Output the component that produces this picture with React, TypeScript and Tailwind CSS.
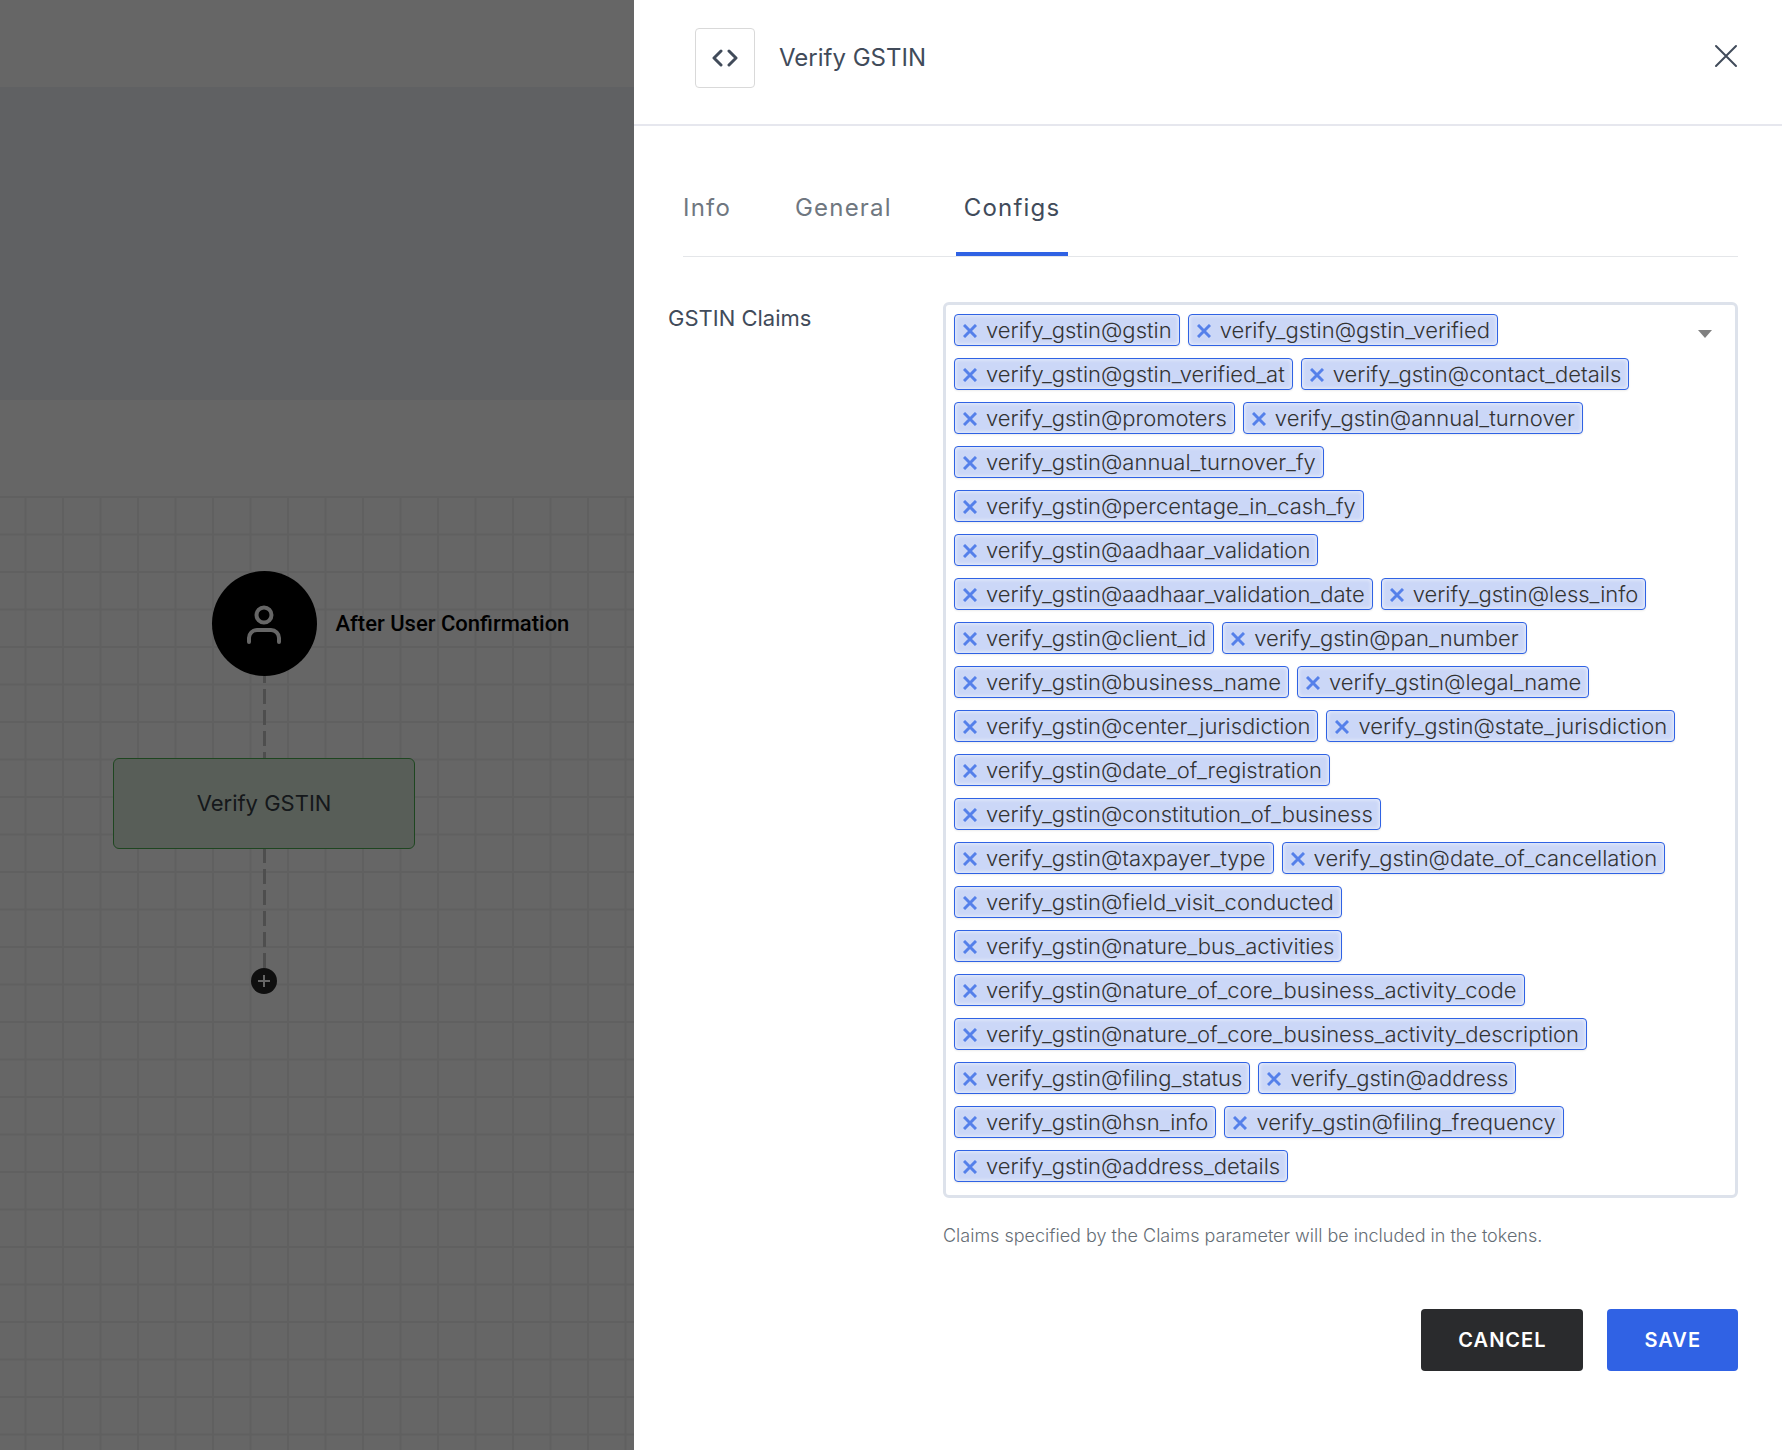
import React, { useState } from 'react';

// Claims offered by the GSTIN verification step
const CLAIMS = [
    'gstin',
    'gstin_verified',
    'gstin_verified_at',
    'contact_details',
    'promoters',
    'annual_turnover',
    'annual_turnover_fy',
    'percentage_in_cash_fy',
    'aadhaar_validation',
    'aadhaar_validation_date',
    'less_info',
    'client_id',
    'pan_number',
    'business_name',
    'legal_name',
    'center_jurisdiction',
    'state_jurisdiction',
    'date_of_registration',
    'constitution_of_business',
    'taxpayer_type',
    'date_of_cancellation',
    'field_visit_conducted',
    'nature_bus_activities',
    'nature_of_core_business_activity_code',
    'nature_of_core_business_activity_description',
    'filing_status',
    'address',
    'hsn_info',
    'filing_frequency',
    'address_details',
].map(name => `verify_gstin@${name}`);

const TABS = ['Info', 'General', 'Configs'];

// Squared paper behind the workflow nodes
const CanvasGrid: React.FC = () => (
    <svg className="absolute inset-0 h-full w-full" aria-hidden="true">
        <defs>
            <pattern id="grid" width="75" height="75" patternUnits="userSpaceOnUse">
                <path d="M0 1H75M0 38.5H75M25.5 0V75M63 0V75" stroke="#f0f0f0" strokeWidth="2" fill="none" />
            </pattern>
        </defs>
        <rect width="100%" height="100%" fill="url(#grid)" />
    </svg>
);

// Dashed connector between two nodes
const Connector: React.FC<{ height: number; offset: number }> = ({ height, offset }) => (
    <svg width="3" height={height} className="block" aria-hidden="true">
        <path d={`M1.5 0V${height}`} stroke="#c4c4c4" strokeWidth="3" strokeDasharray="15 6" strokeDashoffset={offset} />
    </svg>
);

const Workflow: React.FC = () => (
    <div className="relative flex-1 pt-[75px] pl-[113px]">
        <CanvasGrid />
        <div className="relative flex w-[302px] flex-col items-center">
            <div className="relative flex size-[105px] items-center justify-center rounded-full bg-black">
                <svg width="36" height="40" viewBox="0 0 36 40" fill="none" stroke="#fff" strokeWidth="4" strokeLinecap="round" aria-hidden="true">
                    <circle cx="18" cy="11" r="7.5" />
                    <path d="M3 38v-4a8 8 0 0 1 8-8h14a8 8 0 0 1 8 8v4" />
                </svg>
                <span className="absolute left-full ml-[19px] font-['Roboto',sans-serif] text-[22px] font-medium whitespace-nowrap text-black">
                    After User Confirmation
                </span>
            </div>
            <Connector height={82} offset={8} />
            <button className="h-[91px] w-full rounded-md border border-[#4caf50] bg-[#dcebdc] text-[22px] text-[#363c44]">
                Verify GSTIN
            </button>
            <Connector height={119} offset={1} />
            <button aria-label="Add step" className="flex size-[26px] items-center justify-center rounded-full bg-[#262626]">
                <svg width="12" height="12" viewBox="0 0 12 12" stroke="#fff" strokeWidth="2" aria-hidden="true">
                    <path d="M6 0V12M0 6H12" />
                </svg>
            </button>
        </div>
    </div>
);

interface ClaimTagProps {
    claim: string;
    onRemove: (claim: string) => void;
}

const ClaimTag: React.FC<ClaimTagProps> = ({ claim, onRemove }) => (
    <li className="flex h-8 items-center rounded border border-[#2f62e4] bg-[#cbd7f7] pr-[7px] shadow-[inset_0_0_4px_rgba(255,255,255,0.8),0_1px_2px_rgba(0,0,0,0.08)]">
        <button type="button" aria-label={`Remove ${claim}`} onClick={() => onRemove(claim)} className="pt-0.5 pr-[9px] pl-2">
            <svg width="14" height="14" viewBox="0 0 14 14" stroke="#5580ea" strokeWidth="3" className="block" aria-hidden="true">
                <path d="M1 1L13 13M13 1L1 13" />
            </svg>
        </button>
        <span className="text-[22px] leading-[30px] font-light text-[#333]">{claim}</span>
    </li>
);

const App: React.FC = () => {
    const [activeTab, setActiveTab] = useState('Configs');
    const [claims, setClaims] = useState<string[]>(CLAIMS);

    const removeClaim = (claim: string) => {
        setClaims(prev => prev.filter(item => item !== claim));
    };

    return (
        <div className="font-['Inter',sans-serif]">
            {/* Page under the drawer */}
            <div className="flex min-h-screen flex-col overflow-hidden bg-white">
                <div className="h-[87px]" />
                <div className="h-[313px] bg-[#f0f3f7]" />
                <div className="h-24" />
                <Workflow />
            </div>

            {/* Backdrop and drawer */}
            <div className="absolute inset-0 flex justify-end bg-black/60">
                <section role="dialog" aria-label="Verify GSTIN" className="w-full max-w-[1148px] bg-white">
                    <header className="flex items-start justify-between border-b-2 border-[#e6e7ee] pt-7 pr-11 pb-9 pl-[61px]">
                        <div className="flex items-center gap-6">
                            <div className="flex size-[60px] items-center justify-center rounded border border-[#d9d9d9]">
                                <svg width="26" height="18" viewBox="0 0 26 18" fill="none" stroke="#414b5a" strokeWidth="3" strokeLinecap="round" strokeLinejoin="round" aria-hidden="true">
                                    <path d="M9 2L2 9L9 16M17 2L24 9L17 16" />
                                </svg>
                            </div>
                            <h1 className="text-2xl text-[#414b5a]">Verify GSTIN</h1>
                        </div>
                        <button type="button" aria-label="Close" className="mt-4">
                            <svg width="24" height="24" viewBox="0 0 24 24" stroke="#414b5a" strokeWidth="2" strokeLinecap="round" aria-hidden="true">
                                <path d="M2 2L22 22M22 2L2 22" />
                            </svg>
                        </button>
                    </header>

                    <div className="pt-[50px] pr-11 pb-10">
                        <nav className="ml-[49px] flex border-b border-[#e4e6e9]">
                            {TABS.map(tab => (
                                <button
                                    key={tab}
                                    type="button"
                                    onClick={() => setActiveTab(tab)}
                                    className={`mr-14 h-20 border-b-4 px-2 pb-[13px] text-2xl tracking-wider first:mr-12 first:pl-0
                                        ${activeTab === tab ? 'border-[#2f62e4] text-[#414b5a]' : 'border-transparent text-[#6f7780]'}`}
                                >
                                    {tab}
                                </button>
                            ))}
                        </nav>

                        <div className="mt-[45px] flex pl-[34px]">
                            <label htmlFor="claims" className="w-[275px] shrink-0 text-[22px] leading-8 text-[#414b5a]">
                                GSTIN Claims
                            </label>
                            <div className="min-w-0 flex-1">
                                <div className="flex justify-between rounded-md border-[3px] border-[#dde2eb] pt-[9px] pr-[23px] pb-[13px] pl-2">
                                    <ul id="claims" className="flex min-w-0 flex-1 flex-wrap gap-x-2 gap-y-3">
                                        {claims.map(claim => (
                                            <ClaimTag key={claim} claim={claim} onRemove={removeClaim} />
                                        ))}
                                    </ul>
                                    <button type="button" aria-label="Show claims" className="h-10 shrink-0">
                                        <svg width="14" height="8" viewBox="0 0 14 8" fill="#808080" aria-hidden="true">
                                            <path d="M0 0H14L7 8Z" />
                                        </svg>
                                    </button>
                                </div>
                                <p className="mt-6 text-lg font-light text-[#656d75]">
                                    Claims specified by the Claims parameter will be included in the tokens.
                                </p>
                            </div>
                        </div>

                        <div className="mt-[59px] flex justify-end gap-6">
                            <button type="button" className="h-[62px] rounded bg-[#2a2b2d] px-[37px] text-xl font-semibold tracking-wider text-white">
                                CANCEL
                            </button>
                            <button type="button" className="h-[62px] rounded bg-[#3062e4] px-[37px] text-xl font-semibold tracking-wider text-white">
                                SAVE
                            </button>
                        </div>
                    </div>
                </section>
            </div>
        </div>
    );
};

export default App;
